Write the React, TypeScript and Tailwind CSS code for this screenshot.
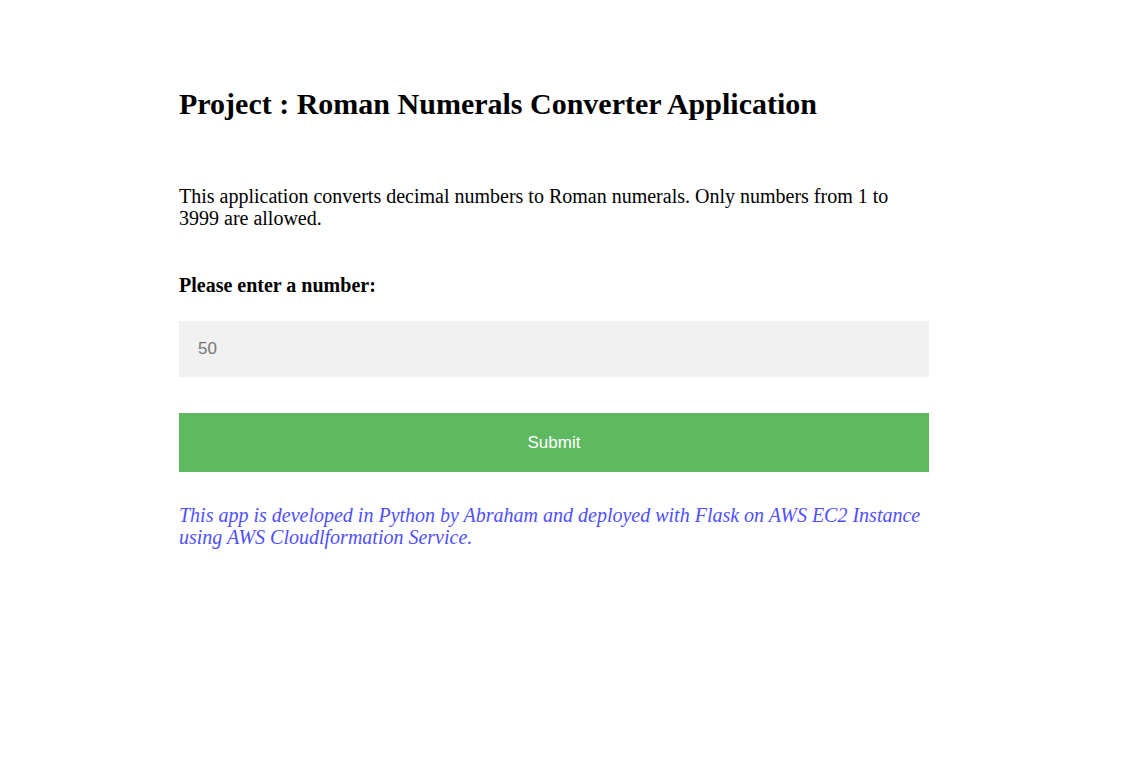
export default function App() {
  return (
    <div className="min-h-screen bg-white font-['Liberation_Serif',serif] text-black">
      <div className="ml-[179px] w-[750px] pt-[87px]">
        <h1 className="text-[30px] font-bold leading-[34px]">
          Project : Roman Numerals Converter Application
        </h1>

        <p className="mt-[64px] text-[20px] leading-[22px]">
          This application converts decimal numbers to Roman numerals. Only numbers from 1 to 3999 are allowed.
        </p>

        <form className="mt-[45px] flex flex-col" onSubmit={(e) => e.preventDefault()}>
          <label className="text-[20px] font-bold leading-[22px]">Please enter a number:</label>
          <input
            type="text"
            placeholder="50"
            className="mt-[25px] h-[56px] w-full bg-[#f1f1f1] px-[19px] font-['Liberation_Sans',sans-serif] text-[17px] text-black outline-none placeholder:text-[#757575]"
          />
          <button
            type="submit"
            className="mt-[36px] h-[59px] w-full bg-[#5eb960] font-['Liberation_Sans',sans-serif] text-[17px] text-white"
          >
            Submit
          </button>
        </form>

        <p className="mt-[32px] text-[20px] italic leading-[22px] text-[#4f4fff]">
          This app is developed in Python by Abraham and deployed with Flask on AWS EC2 Instance using AWS Cloudlformation Service.
        </p>
      </div>
    </div>
  );
}
